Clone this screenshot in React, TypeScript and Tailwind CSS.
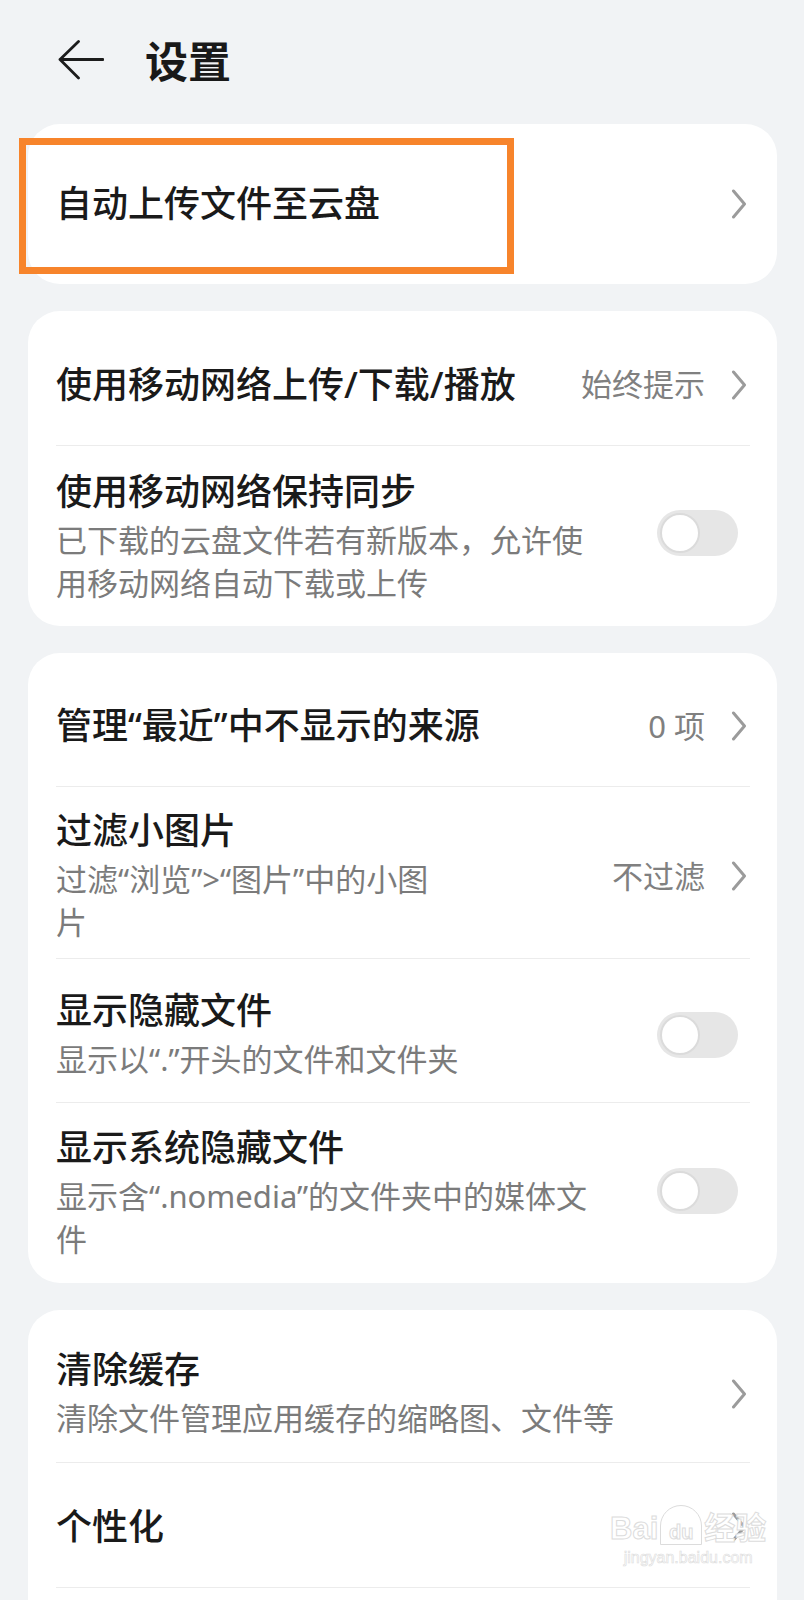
import React from "react";

const font = "font-['Noto_Sans','Noto_Sans_CJK_SC',sans-serif]";

function Chevron() {
  return (
    <svg width="16" height="30" viewBox="0 0 16 30" fill="none" className="shrink-0">
      <path d="M2.5 2 L13.5 15 L2.5 28" stroke="#9b9b9b" strokeWidth="3" strokeLinecap="round" strokeLinejoin="round" />
    </svg>
  );
}

function Toggle({ className = "" }: { className?: string }) {
  return (
    <div className={`mr-[9px] flex h-[46px] w-[81px] shrink-0 items-center rounded-full bg-[#e6e6e6] pl-[3px] ${className}`}>
      <div className="h-[40px] w-[40px] rounded-full border-2 border-[#dbdbdb] bg-white" />
    </div>
  );
}

function Divider() {
  return <div className="ml-[28px] mr-[27px] h-px bg-[#ececec]" />;
}

function Title({ children }: { children: React.ReactNode }) {
  return <div className="text-[36px] leading-[46px] font-medium text-[#1a1a1a]">{children}</div>;
}

function Sub({ children }: { children: React.ReactNode }) {
  return <div className="mt-[4px] text-[31px] leading-[43px] text-[#7b7b7b]">{children}</div>;
}

function Value({ children }: { children: React.ReactNode }) {
  return <span className="mr-[26px] text-[31px] leading-[43px] text-[#808080]">{children}</span>;
}

export default function App() {
  return (
    <div className={`min-h-[1600px] w-full bg-[#f1f3f5] ${font}`}>
      <header className="flex h-[124px] items-center pl-[58px]">
        <svg width="46" height="42" viewBox="0 0 46 42" fill="none" className="mt-[-3px]">
          <path d="M2 19.5 H45 M2 19.5 L20.5 1.5 M2 19.5 L20.5 38" stroke="#1c1c1c" strokeWidth="2.8" strokeLinecap="round" strokeLinejoin="round" />
        </svg>
        <h1 className="ml-[41px] text-[43px] leading-[50px] font-bold text-[#191919]">设置</h1>
      </header>

      <div className="flex flex-col gap-[27px] pl-[28px] pr-[27px]">
        {/* 云盘 */}
        <div className="relative flex h-[160px] items-center justify-between rounded-[32px] bg-white pl-[28px] pr-[30px]">
          <Title>自动上传文件至云盘</Title>
          <Chevron />
          <div className="absolute left-[-9px] top-[14px] h-[136px] w-[495px] border-[7px] border-[#f7842b]" />
        </div>

        {/* 移动网络 */}
        <div className="rounded-[32px] bg-white pt-[13px]">
          <div className="flex h-[121px] items-center justify-between pl-[28px] pr-[30px]">
            <Title>使用移动网络上传/下载/播放</Title>
            <div className="flex items-center">
              <Value>始终提示</Value>
              <Chevron />
            </div>
          </div>
          <Divider />
          <div className="flex items-center justify-between pb-[21px] pl-[28px] pr-[30px] pt-[23px]">
            <div className="w-[545px]">
              <Title>使用移动网络保持同步</Title>
              <Sub>已下载的云盘文件若有新版本，允许使用移动网络自动下载或上传</Sub>
            </div>
            <Toggle className="mt-[-8px]" />
          </div>
        </div>

        {/* 显示 */}
        <div className="rounded-[32px] bg-white pt-[13px]">
          <div className="flex h-[120px] items-center justify-between pl-[28px] pr-[30px]">
            <Title>管理“最近”中不显示的来源</Title>
            <div className="flex items-center">
              <Value>0 项</Value>
              <Chevron />
            </div>
          </div>
          <Divider />
          <div className="flex items-center justify-between pb-[14px] pl-[28px] pr-[30px] pt-[21px]">
            <div className="w-[400px]">
              <Title>过滤小图片</Title>
              <Sub>过滤“浏览”&gt;“图片”中的小图片</Sub>
            </div>
            <div className="flex items-center">
              <Value>不过滤</Value>
              <Chevron />
            </div>
          </div>
          <Divider />
          <div className="flex items-center justify-between pb-[21px] pl-[28px] pr-[30px] pt-[29px]">
            <div className="w-[545px]">
              <Title>显示隐藏文件</Title>
              <Sub>显示以“.”开头的文件和文件夹</Sub>
            </div>
            <Toggle />
          </div>
          <Divider />
          <div className="flex items-center justify-between pb-[22px] pl-[28px] pr-[30px] pt-[22px]">
            <div className="w-[545px]">
              <Title>显示系统隐藏文件</Title>
              <Sub>显示含“.nomedia”的文件夹中的媒体文件</Sub>
            </div>
            <Toggle className="mt-[-4px]" />
          </div>
        </div>

        {/* 其他 */}
        <div className="relative rounded-[32px] bg-white pt-[13px]">
          <div className="flex items-center justify-between pb-[22px] pl-[28px] pr-[30px] pt-[24px]">
            <div>
              <Title>清除缓存</Title>
              <Sub>清除文件管理应用缓存的缩略图、文件等</Sub>
            </div>
            <Chevron />
          </div>
          <Divider />
          <div className="flex items-center justify-between pb-[37px] pl-[28px] pr-[30px] pt-[41px]">
            <Title>个性化</Title>
            <Chevron />
          </div>
          <Divider />
          <div className="h-[120px]" />

          {/* watermark */}
          <div className="pointer-events-none absolute left-[582px] top-[195px] flex flex-col items-center whitespace-nowrap font-['Liberation_Sans','Noto_Sans_CJK_SC',sans-serif]">
            <div className="flex items-end whitespace-nowrap text-[31px] leading-[32px] font-bold text-white [-webkit-text-stroke:1px_#dcdcdc]">
              <span>Bai</span>
              <span className="mx-[2px] flex h-[40px] w-[42px] items-end justify-center rounded-t-full border border-[#dcdcdc] text-[20px] leading-[24px]">du</span>
              <span>经验</span>
            </div>
            <div className="mt-[5px] text-[16px] leading-[16px] text-white [-webkit-text-stroke:0.6px_#dcdcdc]">jingyan.baidu.com</div>
          </div>
        </div>
      </div>
    </div>
  );
}
